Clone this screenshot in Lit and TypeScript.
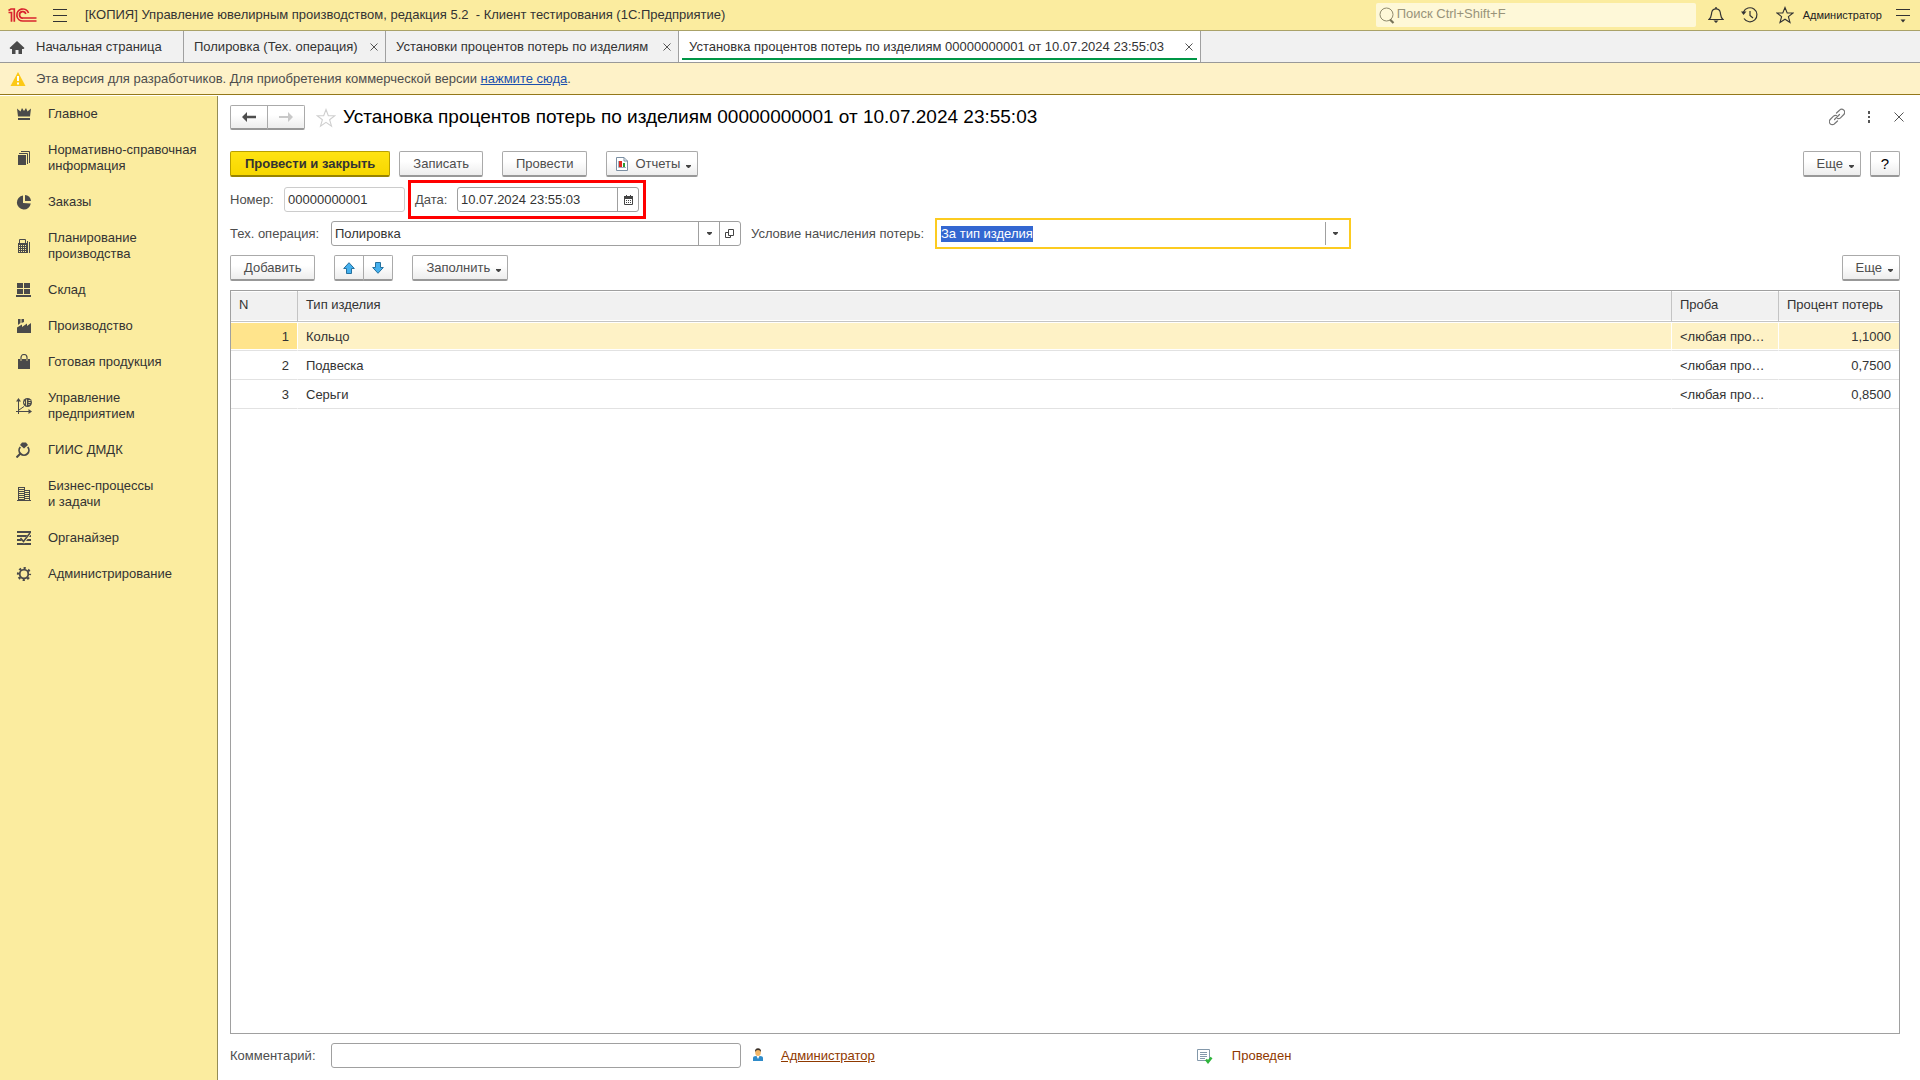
import { LitElement, html, css, svg, nothing, type TemplateResult, type SVGTemplateResult } from "lit";
import { customElement, property, query, state } from "lit/decorators.js";
import { classMap } from "lit/directives/class-map.js";
import { styleMap } from "lit/directives/style-map.js";

interface Icon {
  w: number;
  h: number;
  body: SVGTemplateResult;
}

const icons: Record<string, Icon> = {
  logo: { w: 30, h: 18, body: svg`<g fill="none" stroke="#d9232e" stroke-width="1.700">
    <path d="M.5 6.500H3.500V15.800"/><path d="M.5 4.500 3 3H6.300V15.800"/>
    <path d="M20.500 7A6 6 0 1 0 15 15H28.500"/>
    <path d="M17.800 8A3.200 3.200 0 1 0 15 12H28.500"/></g>` },
  burger: { w: 16, h: 16, body: svg`<path d="M1 2.500h14M1 8.500h14M1 14.500h14" stroke="#333"/>` },
  home: { w: 16, h: 16, body: svg`<path d="M8 2 15.500 9 14.500 10H13V15H9.500V11H6.500V15H3V10H1.500L.5 9Z" fill="#4a4a4a"/>` },
  warn: { w: 16, h: 16, body: svg`<path d="M8 1 15.500 15H.5Z" fill="#fcc916"/><path d="M7 5h2v5H7zM7 11.500h2v2H7z" fill="#fff"/>` },
  close: { w: 8, h: 8, body: svg`<path d="M.5 .5 7.500 7.500M7.500 .5 .5 7.500" stroke="#555"/>` },
  search: { w: 16, h: 18, body: svg`<circle cx="7.500" cy="8.500" r="6.500" fill="none" stroke="#8f8a6c"/><path d="M11 13.500 14.500 17" stroke="#77735a" stroke-width="2.200"/>` },
  bell: { w: 16, h: 18, body: svg`<path d="M1 13.500H15C12.500 11.500 12.800 9.500 12.300 6.500 11.800 4 10 2.800 8 2.800S4.200 4 3.700 6.500C3.200 9.500 3.500 11.500 1 13.500Z" fill="none" stroke="#333" stroke-width="1.200"/><path d="M7.300 1h1.400v2H7.300zM5.500 14.500h5L8 17Z" fill="#333"/>` },
  history: { w: 18, h: 18, body: svg`<path d="M2.500 6A7 7 0 1 1 3 12.500" fill="none" stroke="#333" stroke-width="1.200"/><path d="M0 5.500H5.500L2.500 9Z" fill="#333"/><path d="M9 5V9.500L12 12" fill="none" stroke="#333" stroke-width="1.200"/>` },
  star: { w: 18, h: 18, body: svg`<path d="M9 1.500 11.200 7H17L12.400 10.600 14 16.500 9 13.200 4 16.500 5.600 10.600 1 7H6.800Z" fill="none" stroke="#333" stroke-width="1.100"/>` },
  starGrey: { w: 20, h: 20, body: svg`<path d="M10 1.500 12.300 7.700H18.800L13.600 11.700 15.500 18.200 10 14.400 4.500 18.200 6.400 11.700 1.200 7.700H7.700Z" fill="none" stroke="#cfcfcf" stroke-width="1.100"/>` },
  panel: { w: 16, h: 16, body: svg`<path d="M1 2.500h14M1 8.500h14" stroke="#333"/><path d="M5.500 12.500h5L8 15.500Z" fill="#333"/>` },
  link: { w: 16, h: 18, body: svg`<g fill="none" stroke="#777" stroke-width="1.200" stroke-linecap="round"><path d="M7.500 5 10.500 2.200A3 3 0 0 1 14.800 6.500L11.500 9.800A3 3 0 0 1 8.500 10.500"/><path d="M8.500 13 5.500 15.800A3 3 0 0 1 1.200 11.500L4.500 8.200A3 3 0 0 1 7.500 7.500"/><path d="M5.500 11.500 10.500 6.500"/></g>` },
  dots: { w: 4, h: 12, body: svg`<path d="M1 0h2v3H1zM1 5h2v2H1zM1 9h2v3H1z" fill="#555"/>` },
  closeForm: { w: 12, h: 12, body: svg`<path d="M1.500 1.500 10.500 10.500M10.500 1.500 1.500 10.500" stroke="#555"/>` },
  back: { w: 14, h: 10, body: svg`<path d="M5 0V3.700H14V6.300H5V10L0 5Z" fill="#4d4d4d"/>` },
  forward: { w: 14, h: 10, body: svg`<path d="M9 0V4H0V6H9V10L14 5Z" fill="#c8c8c8"/>` },
  caret: { w: 5, h: 3, body: svg`<path d="M0 0H5V1L3 3H2L0 1Z" fill="#444"/>` },
  report: { w: 14, h: 14, body: svg`<path d="M1.500 .5H9L12.500 4V13.500H1.500Z" fill="#fff" stroke="#7b8fa3"/><path d="M9 .5V4H12.500" fill="none" stroke="#7b8fa3"/><path d="M4 4h3v6H4z" fill="#e02a20"/><path d="M8 6h2v4H8z" fill="#2c9a34"/><path d="M3.500 4V10.500H11" fill="none" stroke="#9fb0bd"/>` },
  calendar: { w: 9, h: 10, body: svg`<path d="M.5 1.500h8v8h-8z" fill="#fff" stroke="#444"/><path d="M0 1h9v3H0zM2 0h1v1H2zM6 0h1v1H6z" fill="#444"/><path d="M2 5h1v1H2zM4 5h1v1H4zM6 5h1v1H6zM2 7h1v1H2zM4 7h1v1H4zM6 7h1v1H6z" fill="#444"/>` },
  open: { w: 10, h: 10, body: svg`<path d="M3.500 .5h5v6h-5z" fill="none" stroke="#444"/><path d="M3 3.500H.5V8.500H5.500V7" fill="none" stroke="#444"/>` },
  up: { w: 12, h: 12, body: svg`<path d="M6 .7 11.300 6.500H8.500V11.500H3.500V6.500H.7Z" fill="#45b0ee" stroke="#24719f"/>` },
  down: { w: 12, h: 12, body: svg`<path d="M6 11.300 11.300 5.500H8.500V.5H3.500V5.500H.7Z" fill="#45b0ee" stroke="#24719f"/>` },
  person: { w: 10, h: 14, body: svg`<path d="M0 13V10Q0 8 3 8H7Q10 8 10 10V13Z" fill="#2f8bc9"/><path d="M3.500 8H6.500L5 11Z" fill="#fff"/><ellipse cx="5" cy="4.500" rx="2.800" ry="3.500" fill="#f3b768"/><path d="M2 4Q1.800 .3 5 .3T8 4Q7 2 5 2T2 4Z" fill="#3c3128"/>` },
  posted: { w: 16, h: 16, body: svg`<path d="M.5 1.500h12v11h-12z" fill="#fff" stroke="#8398aa"/><path d="M3 4.500h7M3 6.500h7M3 8.500h7M3 10.500h5" stroke="#8398aa"/><path d="M9 11.500 11 14 14.500 9.500" fill="none" stroke="#2fb53c" stroke-width="2.500"/>` },
  crown: { w: 16, h: 16, body: svg`<path d="M1 2.500 4.500 5.500 6 2 8 5 10 2 11.500 5.500 15 2.500 14 10.500H2ZM2 12h12v2H2z" fill="#4a4a4a"/>` },
  docs: { w: 16, h: 16, body: svg`<path d="M2 5h8v10H2z" fill="#4a4a4a"/><path d="M3 3.500H11.500V14M5 1.500H13.500V13" fill="none" stroke="#4a4a4a"/>` },
  pie: { w: 16, h: 16, body: svg`<path d="M7 1.500A7 7 0 1 0 14.800 9.500L7 9Z" fill="#4a4a4a"/><path d="M9 1A6.200 6.200 0 0 1 15 7H9Z" fill="#4a4a4a"/>` },
  calc: { w: 16, h: 16, body: svg`<path d="M3.500 6V1.500H9.500V6" fill="none" stroke="#4a4a4a"/><path d="M2 5H11V15H2z" fill="#4a4a4a"/><path d="M11.500 3V15M13.500 4V15" stroke="#4a4a4a"/><path d="M3 7.500h7M3 9.500h7M3 11.500h7M3 13.500h7" stroke="#fbec9f" stroke-dasharray="1 1"/>` },
  store: { w: 16, h: 16, body: svg`<path d="M1 1h6v5H1zM8 1h6v5H8zM1 7h6v5H1zM8 7h6v5H8zM0 13h15v2H0z" fill="#4a4a4a"/>` },
  factory: { w: 16, h: 16, body: svg`<path d="M1 15V9.500L6 6.500V9L11 5.500V8L15 5V15ZM2 1H4.500V5L2 7ZM5.500 1H8V4L5.500 5Z" fill="#4a4a4a"/>` },
  bag: { w: 16, h: 16, body: svg`<path d="M2 5h12v10H2z" fill="#4a4a4a"/><path d="M5 5V3.500A3 3 0 0 1 11 3.500V5" fill="none" stroke="#4a4a4a" stroke-width="1.200"/><path d="M5 5V7M11 5V7" stroke="#fbec9f" stroke-width=".8"/>` },
  chart: { w: 16, h: 16, body: svg`<path d="M2.500 1V16M0 13.500H14" stroke="#4a4a4a"/><path d="M0 3.500 2.500 0 5 3.500ZM12.500 11 16 13.500 12.500 16Z" fill="#4a4a4a"/><path d="M3 12 8 8.500" stroke="#4a4a4a"/><circle cx="11.500" cy="4.500" r="4.500" fill="#4a4a4a"/><path d="M10.500 1.500V7.500M12.500 2.500h2M12.500 4.500h2M12.500 6.500h1M8.500 3.500v2" stroke="#fbec9f" stroke-width=".9"/>` },
  ring: { w: 16, h: 16, body: svg`<path d="M6 .5H10L12 3 8 6.500 4 3Z" fill="#4a4a4a"/><path d="M4.300 5A4.900 4.900 0 1 0 11.700 5" fill="none" stroke="#4a4a4a" stroke-width="1.800"/><path d="M4.500 11.500 .5 15.500" stroke="#4a4a4a" stroke-width="2"/>` },
  building: { w: 16, h: 16, body: svg`<path d="M2 1h7v13H2zM9 4h5v10H9zM1 14h14v1H1z" fill="#4a4a4a"/><path d="M3 2.500h5M3 4.500h5M3 6.500h5M3 8.500h5M3 10.500h5M3 12.500h5M9 5.500h4M9 7.500h4M9 9.500h4M9 11.500h4M9 13.500h4" stroke="#fbec9f"/>` },
  organizer: { w: 16, h: 16, body: svg`<path d="M1 2h14M1 6h14M1 10h14M1 14h14" stroke="#4a4a4a" stroke-width="2"/><path d="M5 7.500 8 11.500 14 3.500" fill="none" stroke="#fbec9f" stroke-width="2.600"/><path d="M4.500 8 7.500 11.500 14 3" fill="none" stroke="#4a4a4a" stroke-width="1.600"/>` },
  gear: { w: 16, h: 16, body: svg`<circle cx="8" cy="8" r="4.300" fill="none" stroke="#4a4a4a" stroke-width="1.800"/><circle cx="8" cy="8" r="6" fill="none" stroke="#4a4a4a" stroke-width="2.200" stroke-dasharray="2.200 2.512" stroke-dashoffset="1.100"/>` },
};

const icon = (name: string): TemplateResult => {
  const i = icons[name];
  return html`<svg class="icon" width=${i.w} height=${i.h} viewBox="0 0 ${i.w} ${i.h}" aria-hidden="true">${i.body}</svg>`;
};

const shared = css`
  :host, input, button { font-family: "Liberation Sans", Arial, sans-serif; font-size: 13px; line-height: 16px; }
  *, *::before, *::after { box-sizing: border-box; }
  a { text-underline-offset: 1px; }
  button { margin: 0; cursor: pointer; color: inherit; }
  .icon { display: block; flex: none; }
  .plain { display: grid; place-items: center; padding: 0; border: 0; background: none; }
`;

@customElement("app-header")
class AppHeader extends LitElement {
  static styles = [shared, css`
    :host { display: flex; align-items: center; height: 31px; padding: 0 9px 0 8px; background: #fbec9f; border-bottom: 1px solid #aaa268; color: #333; }
    .burger { margin: 0 17px 0 14px; }
    .title { flex: 1; white-space: pre; }
    .search { display: flex; align-items: center; gap: 2px; width: 320px; height: 24px; margin-bottom: 1px; padding-left: 3px; border-radius: 2px; background: #fef8d8; }
    .search input { flex: 1; min-width: 0; padding: 0 0 1px; border: 0; outline: 0; background: none; font-size: 13px; }
    .search input::placeholder { color: #98937a; opacity: 1; }
    .tools { display: flex; align-items: center; gap: 17px; margin-left: 12px; }
    .user { margin: 0 13px 0 9px; font-size: 11px; color: #222; }
  `];
  render() {
    return html`
      ${icon("logo")}
      <button class="plain burger" aria-label="Меню">${icon("burger")}</button>
      <span class="title">[КОПИЯ] Управление ювелирным производством, редакция 5.2  - Клиент тестирования (1С:Предприятие)</span>
      <label class="search">${icon("search")}<input type="text" placeholder="Поиск Ctrl+Shift+F" aria-label="Поиск" /></label>
      <div class="tools">
        <button class="plain" aria-label="Оповещения">${icon("bell")}</button>
        <button class="plain" aria-label="История">${icon("history")}</button>
        <button class="plain" aria-label="Избранное">${icon("star")}</button>
      </div>
      <button class="plain user">Администратор</button>
      <button class="plain" aria-label="Настройки панели">${icon("panel")}</button>`;
  }
}

@customElement("app-tabs")
class AppTabs extends LitElement {
  @state() private active = 3;
  private tabs = [
    { title: "Начальная страница", width: 184 },
    { title: "Полировка (Тех. операция)", width: 202 },
    { title: "Установки процентов потерь по изделиям", width: 293 },
    { title: "Установка процентов потерь по изделиям 00000000001 от 10.07.2024 23:55:03", width: 522 },
  ];
  static styles = [shared, css`
    :host { display: flex; height: 32px; background: #f1f1f1; border-bottom: 1px solid #999; color: #333; }
    .tab { position: relative; display: flex; align-items: center; justify-content: space-between; gap: 8px; padding: 0 7px 0 10px; border-right: 1px solid #a0a0a0; }
    .tab.home { padding-left: 9px; }
    .name { display: flex; align-items: center; gap: 11px; height: 31px; white-space: nowrap; }
    .tab.active { background: #fff; }
    .tab.active::after { content: ""; position: absolute; left: 3px; right: 3px; bottom: 2px; height: 2px; background: #009646; }
  `];
  render() {
    return this.tabs.map((t, i) => html`
      <div class=${classMap({ tab: true, home: i === 0, active: i === this.active })} style=${styleMap({ minWidth: `${t.width}px` })}>
        <button class="plain name" @click=${() => (this.active = i)}>${i === 0 ? icon("home") : nothing}${t.title}</button>
        ${i ? html`<button class="plain" aria-label="Закрыть">${icon("close")}</button>` : nothing}
      </div>`);
  }
}

@customElement("app-nav")
class AppNav extends LitElement {
  private items: [string, string][] = [
    ["crown", "Главное"],
    ["docs", "Нормативно-справочная информация"],
    ["pie", "Заказы"],
    ["calc", "Планирование производства"],
    ["store", "Склад"],
    ["factory", "Производство"],
    ["bag", "Готовая продукция"],
    ["chart", "Управление предприятием"],
    ["ring", "ГИИС ДМДК"],
    ["building", "Бизнес-процессы и\u00a0задачи"],
    ["organizer", "Органайзер"],
    ["gear", "Администрирование"],
  ];
  static styles = [shared, css`
    :host { display: block; flex: none; width: 218px; background: #fbec9f; border-right: 1px solid #948c55; }
    .item { display: flex; align-items: center; gap: 16px; padding: 10px 12px 10px 16px; color: #333; text-decoration: none; }
    .text { max-width: 156px; }
  `];
  render() {
    return html`<nav>${this.items.map(([i, t]) => html`<a class="item" href="#">${icon(i)}<span class="text">${t}</span></a>`)}</nav>`;
  }
}

@customElement("loss-form")
class LossForm extends LitElement {
  @property({ type: Number }) selected = 0;
  @query("#condition") private condition!: HTMLInputElement;
  private rows = [
    ["Кольцо", "<любая проба>", "1,1000"],
    ["Подвеска", "<любая проба>", "0,7500"],
    ["Серьги", "<любая проба>", "0,8500"],
  ];
  static styles = [shared, css`
    :host { display: flex; flex-direction: column; flex: 1; min-width: 0; padding: 9px 20px 12px 12px; background: #fff; color: #4d4d4d; }
    .row { display: flex; align-items: center; }
    .head { height: 25px; }
    h1 { flex: 1; margin: 0; padding-bottom: 2px; font-size: 19px; line-height: 24px; font-weight: 400; color: #000; white-space: nowrap; }
    .fav { margin: 0 7px 0 11px; }
    .form-tools { gap: 22px; margin-right: -5px; padding-bottom: 1px; }
    .btn { display: inline-flex; align-items: center; justify-content: center; gap: 6px; height: 26px; padding: 1px 13px 0; border: 1px solid #aaa; border-bottom: 2px solid #989898; border-radius: 2px; background: linear-gradient(#fff 40%, #ededed); white-space: nowrap; }
    .btn.primary { padding: 1px 14px 0; border-color: #b89f00; border-bottom-color: #988400; background: linear-gradient(#ffe312, #f7d700); font-weight: 700; color: #333; }
    .btn.menu { padding-right: 6px; }
    .btn.menu .icon:last-child { margin-top: 4px; }
    .btn.report { padding-left: 8px; }
    .btn.help { width: 30px; padding: 0; font-size: 15px; color: #000; }
    .pair { display: flex; }
    .pair .btn { width: 30px; padding: 0; border-radius: 2px 0 0 2px; }
    .pair .btn + .btn { margin-left: -1px; border-radius: 0 2px 2px 0; }
    .history .btn { width: 38px; height: 25px; }
    .commands { margin-top: 21px; }
    .gap-s { margin-left: 9px; }
    .gap-l { margin-left: 19px; }
    .end { margin-left: auto; }
    .numbers { margin-top: 10px; }
    .params, .toolbar, .list { margin-top: 9px; }
    .params, .numbers, .footer { height: 25px; }
    .field { display: flex; height: 25px; border: 1px solid #a0a0a0; border-radius: 3px; background: #fff; }
    .field input { flex: 1; min-width: 0; padding: 0 3px; border: 0; outline: 0; background: none; color: #333; }
    .field button { width: 21px; border-left: 1px solid #a0a0a0; }
    .label { flex: none; width: 101px; white-space: nowrap; }
    .label.short { width: 54px; }
    .number { width: 121px; border-color: #ccc; }
    .date { position: relative; display: flex; align-items: center; margin-left: 10px; }
    .date::after { content: ""; position: absolute; inset: -7px; border: 3px solid #f00; pointer-events: none; }
    .date .label { width: 42px; }
    .date .field { width: 182px; }
    .std { width: 410px; }
    .label.cond { width: 184px; margin-left: 10px; }
    .field.focus { width: 416px; height: 31px; padding: 2px 0; border: 2px solid #fccb20; border-radius: 0; }
    .field.focus input { padding: 0 4px; }
    .field.focus button { width: 24px; padding-right: 4px; }
    .field.focus input::selection { background: #3367d1; color: #fff; }
    .list { flex: 1; border: 1px solid #a0a0a0; }
    table { width: 100%; table-layout: fixed; border-collapse: separate; border-spacing: 0; color: #333; }
    th, td { padding: 0 8px; overflow: hidden; text-align: left; text-overflow: ellipsis; white-space: nowrap; font-weight: 400; }
    th { height: 31px; padding-bottom: 2px; border: 0 solid #c4c4c4; border-bottom-width: 1px; background: #f1f1f1; box-shadow: inset 0 1px #fff, inset 0 -1px #fff; }
    th:not(:last-child) { border-right-width: 1px; }
    td { height: 29px; padding-top: 1px; border-bottom: 1px solid #e2e2e2; }
    td:not(:last-child) { border-right: 1px solid transparent; }
    .current td { border-right-color: #fff; background: #fef2c6; box-shadow: inset 0 1px #fff, inset 0 -1px #fff; }
    .current td:first-child { background: #ffe48c; }
    .num { text-align: right; }
    .c-n { width: 67px; }
    .c-probe { width: 107px; }
    .c-loss { width: 120px; }
    .footer { margin-top: 9px; }
    .author { display: flex; flex: 11; align-items: center; }
    .status { display: flex; flex: 8; align-items: center; gap: 19px; }
    .author .icon { margin: 0 18px 2px 12px; }
    .accent { color: #8f3900; }
  `];
  firstUpdated() {
    this.condition.focus();
    this.condition.select();
  }
  render() {
    return html`
      <div class="row head">
        <div class="pair history">
          <button class="btn" aria-label="Назад">${icon("back")}</button>
          <button class="btn" aria-label="Вперед">${icon("forward")}</button>
        </div>
        <button class="plain fav" aria-label="В избранное">${icon("starGrey")}</button>
        <h1>Установка процентов потерь по изделиям 00000000001 от 10.07.2024 23:55:03</h1>
        <div class="row form-tools">
          <button class="plain" aria-label="Ссылка">${icon("link")}</button>
          <button class="plain" aria-label="Еще действия">${icon("dots")}</button>
          <button class="plain" aria-label="Закрыть">${icon("closeForm")}</button>
        </div>
      </div>
      <div class="row commands">
        <button class="btn primary">Провести и закрыть</button>
        <button class="btn gap-s">Записать</button>
        <button class="btn gap-l">Провести</button>
        <button class="btn menu report gap-l">${icon("report")}Отчеты${icon("caret")}</button>
        <button class="btn menu end">Еще${icon("caret")}</button>
        <button class="btn help gap-s">?</button>
      </div>
      <div class="row numbers">
        <label class="label short" for="number">Номер:</label>
        <div class="field number"><input id="number" .value=${"00000000001"} readonly /></div>
        <div class="date">
          <label class="label" for="date">Дата:</label>
          <div class="field"><input id="date" .value=${"10.07.2024 23:55:03"} /><button class="plain" aria-label="Календарь">${icon("calendar")}</button></div>
        </div>
      </div>
      <div class="row params">
        <label class="label" for="operation">Тех. операция:</label>
        <div class="field std"><input id="operation" .value=${"Полировка"} /><button class="plain" aria-label="Выбрать">${icon("caret")}</button><button class="plain" aria-label="Открыть">${icon("open")}</button></div>
        <label class="label cond" for="condition">Условие начисления потерь:</label>
        <div class="field focus"><input id="condition" .value=${"За тип изделия"} /><button class="plain" aria-label="Выбрать">${icon("caret")}</button></div>
      </div>
      <div class="row toolbar">
        <button class="btn">Добавить</button>
        <div class="pair gap-l">
          <button class="btn" aria-label="Вверх">${icon("up")}</button>
          <button class="btn" aria-label="Вниз">${icon("down")}</button>
        </div>
        <button class="btn menu gap-l">Заполнить${icon("caret")}</button>
        <button class="btn menu end">Еще${icon("caret")}</button>
      </div>
      <div class="list">
        <table>
          <colgroup><col class="c-n" /><col /><col class="c-probe" /><col class="c-loss" /></colgroup>
          <thead><tr><th>N</th><th>Тип изделия</th><th>Проба</th><th>Процент потерь</th></tr></thead>
          <tbody>
            ${this.rows.map(([type, probe, loss], i) => html`
              <tr class=${classMap({ current: i === this.selected })} @click=${() => (this.selected = i)}>
                <td class="num">${i + 1}</td><td>${type}</td><td>${probe}</td><td class="num">${loss}</td>
              </tr>`)}
          </tbody>
        </table>
      </div>
      <div class="row footer">
        <div class="author">
          <label class="label" for="comment">Комментарий:</label>
          <div class="field std"><input id="comment" /></div>
          ${icon("person")}
          <a class="accent" href="#">Администратор</a>
        </div>
        <div class="status">${icon("posted")}<span class="accent">Проведен</span></div>
      </div>`;
  }
}

@customElement("app-root")
class AppRoot extends LitElement {
  static styles = [shared, css`
    :host { display: flex; flex-direction: column; min-height: 100vh; background: #fff; }
    .notice { display: flex; align-items: center; gap: 10px; height: 32px; padding: 0 10px; border-bottom: 1px solid #94781a; background: #fef2c8; color: #4d4d4d; }
    .notice a { color: #1a4fae; }
    .body { display: flex; flex: 1; padding-top: 1px; }
  `];
  render() {
    return html`
      <app-header></app-header>
      <app-tabs></app-tabs>
      <div class="notice">${icon("warn")}<span>Эта версия для разработчиков. Для приобретения коммерческой версии <a href="#">нажмите сюда</a>.</span></div>
      <div class="body"><app-nav></app-nav><loss-form></loss-form></div>`;
  }
}
